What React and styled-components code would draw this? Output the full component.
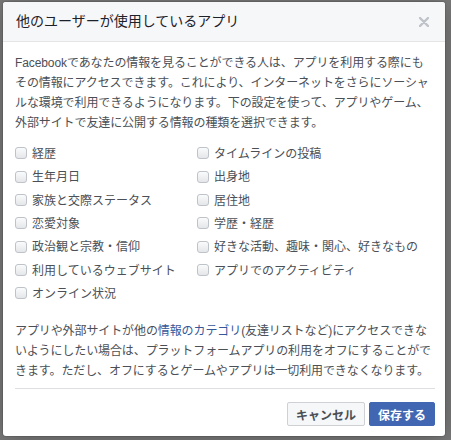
import React from 'react';
import styled, { createGlobalStyle } from 'styled-components';

const GlobalStyle = createGlobalStyle`
    body {
        margin: 0;
        background: #7b7b7b;
        font-family: "Liberation Sans", "Noto Sans CJK JP", sans-serif;
    }
`;

const leftItems = [
    '経歴',
    '生年月日',
    '家族と交際ステータス',
    '恋愛対象',
    '政治観と宗教・信仰',
    '利用しているウェブサイト',
    'オンライン状況'
];

const rightItems = [
    'タイムラインの投稿',
    '出身地',
    '居住地',
    '学歴・経歴',
    '好きな活動、趣味・関心、好きなもの',
    'アプリでのアクティビティ'
];

export default function App() {
    return (
        <>
            <GlobalStyle />
            <Page>
                <Dialog>
                    <Header>
                        <Title>他のユーザーが使用しているアプリ</Title>
                        <CloseButton aria-label="閉じる">
                            <svg width="10" height="10" viewBox="0 0 10 10">
                                <path d="M1 1 L9 9 M9 1 L1 9" stroke="#bec2c9" strokeWidth="2.4" strokeLinecap="round" />
                            </svg>
                        </CloseButton>
                    </Header>
                    <Body>
                        <Paragraph>
                            Facebookであなたの情報を見ることができる人は、アプリを利用する際にもその情報にアクセスできます。これにより、インターネットをさらにソーシャルな環境で利用できるようになります。下の設定を使って、アプリやゲーム、外部サイトで友達に公開する情報の種類を選択できます。
                        </Paragraph>
                        <OptionGrid>
                            {leftItems.concat(rightItems).map((label, index) => (
                                <Option key={index}>
                                    <Checkbox type="checkbox" />
                                    <span>{label}</span>
                                </Option>
                            ))}
                        </OptionGrid>
                        <Paragraph>
                            アプリや外部サイトが他の<Link href="#">情報のカテゴリ</Link>(友達リストなど)にアクセスできないようにしたい場合は、プラットフォームアプリの利用をオフにすることができます。ただし、オフにするとゲームやアプリは一切利用できなくなります。
                        </Paragraph>
                    </Body>
                    <Footer>
                        <Button>キャンセル</Button>
                        <Button primary>保存する</Button>
                    </Footer>
                </Dialog>
            </Page>
        </>
    );
}

const Page = styled.div`
    width: 451px;
    height: 440px;
    padding: 2px 0 0 3px;
    box-sizing: border-box;
`;

const Dialog = styled.div`
    width: 442px;
    height: 434px;
    background: #fff;
    border-radius: 3px;
    box-shadow: 0 2px 26px rgba(0, 0, 0, .3), 0 0 0 1px rgba(0, 0, 0, .1);
    overflow: hidden;
    display: flex;
    flex-direction: column;
`;

const Header = styled.div`
    height: 39px;
    background: #f6f7f9;
    border-bottom: 1px solid #e5e5e5;
    display: flex;
    align-items: center;
    justify-content: space-between;
    padding: 0 16px 0 13px;
`;

const Title = styled.h3`
    margin: 0;
    font-size: 14px;
    font-weight: normal;
    color: #1d2129;
    line-height: 19px;
`;

const CloseButton = styled.span`
    display: flex;
    align-items: center;
    padding-top: 2px;
`;

const Body = styled.div`
    padding: 11px 12px 7px 12px;
    color: #4b4f56;
    font-size: 12px;
`;

const Paragraph = styled.p`
    margin: 0;
    line-height: 20px;
    letter-spacing: -0.1px;
`;

const OptionGrid = styled.div`
    display: grid;
    grid-template-columns: 182px 1fr;
    grid-template-rows: repeat(7, 23.33px);
    grid-auto-flow: column;
    margin: 8px 0 17px;
`;

const Option = styled.label`
    display: flex;
    align-items: center;
    gap: 5px;
    color: #4b4f56;
    white-space: nowrap;
`;

const Checkbox = styled.input`
    appearance: none;
    margin: 2px 0 0;
    width: 12px;
    height: 12px;
    border: 1px solid #bec2c9;
    border-radius: 3px;
    background: linear-gradient(#fafbfb, #e4e6e9);
    box-sizing: border-box;
`;

const Link = styled.a`
    color: #365899;
    text-decoration: none;
`;

const Footer = styled.div`
    margin: 0 10px 0 12px;
    border-top: 1px solid #dddfe2;
    padding: 13px 0 10px;
    display: flex;
    justify-content: flex-end;
    gap: 4px;
`;

const Button = styled.button`
    height: 24px;
    padding: 0 8px;
    font-family: "Liberation Sans", "Noto Sans CJK JP", sans-serif;
    font-size: 12px;
    font-weight: bold;
    border-radius: 2px;
    border: 1px solid ${props => props.primary ? '#4267b2' : '#ced0d4'};
    background: ${props => props.primary ? '#4267b2' : '#f6f7f9'};
    color: ${props => props.primary ? '#fff' : '#4b4f56'};
`;
